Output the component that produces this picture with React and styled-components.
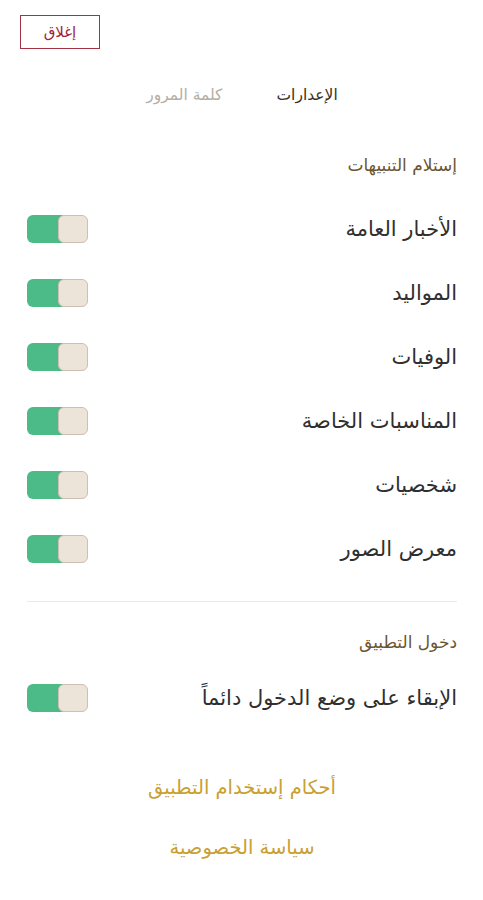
import React, { useState } from "react";
import styled, { createGlobalStyle } from "styled-components";

const GlobalStyle = createGlobalStyle`
  body {
    margin: 0;
    background: #ffffff;
    font-family: "DejaVu Sans", "Noto Sans", sans-serif;
  }
`;

const notifications = [
  "الأخبار العامة",
  "المواليد",
  "الوفيات",
  "المناسبات الخاصة",
  "شخصيات",
  "معرض الصور",
];

function Toggle({ on, onClick }) {
  return (
    <Switch onClick={onClick}>
      <Track $on={on} />
      <Knob />
    </Switch>
  );
}

function App() {
  const [state, setState] = useState(
    notifications.map(() => true).concat([true])
  );
  const flip = (i) => setState((s) => s.map((v, j) => (j === i ? !v : v)));

  return (
    <Page>
      <GlobalStyle />
      <TopBar>
        <CloseButton>إغلاق</CloseButton>
      </TopBar>
      <Tabs>
        <Tab $active>الإعدارات</Tab>
        <Tab>كلمة المرور</Tab>
      </Tabs>

      <SectionTitle>إستلام التنبيهات</SectionTitle>
      <List $gap="20px">
        {notifications.map((label, i) => (
          <Row key={label}>
            <Label>{label}</Label>
            <Toggle on={state[i]} onClick={() => flip(i)} />
          </Row>
        ))}
      </List>

      <Divider />

      <SectionTitle $small>دخول التطبيق</SectionTitle>
      <List $gap="12px">
        <Row>
          <Label>الإبقاء على وضع الدخول دائماً</Label>
          <Toggle on={state[6]} onClick={() => flip(6)} />
        </Row>
      </List>

      <Links>
        <LinkText>أحكام إستخدام التطبيق</LinkText>
        <LinkText>سياسة الخصوصية</LinkText>
      </Links>
    </Page>
  );
}

export default App;

const Page = styled.div`
  direction: rtl;
  width: 483px;
  min-height: 900px;
  box-sizing: border-box;
  padding: 15px 26px 0 27px;
`;

const TopBar = styled.div`
  display: flex;
  justify-content: flex-end;
`;

const CloseButton = styled.button`
  width: 80px;
  height: 34px;
  margin-left: -7px;
  background: #fff;
  border: 1.5px solid #a23244;
  color: #a01e35;
  font-family: "DejaVu Sans", sans-serif;
  font-size: 15px;
  padding: 0;
  cursor: pointer;
`;

const Tabs = styled.div`
  display: flex;
  justify-content: center;
  gap: 54px;
  margin-top: 34px;
  height: 24px;
  align-items: center;
`;

const Tab = styled.div`
  font-size: 15.5px;
  color: ${(p) => (p.$active ? "#3a3120" : "#b3aea6")};
`;

const SectionTitle = styled.div`
  margin-top: ${(p) => (p.$small ? "28px" : "46px")};
  height: 24px;
  line-height: 24px;
  font-size: 17px;
  color: #6b5530;
`;

const List = styled.div`
  margin-top: ${(p) => p.$gap};
`;

const Row = styled.div`
  display: flex;
  justify-content: space-between;
  align-items: center;
  height: 64px;
`;

const Label = styled.div`
  font-size: 21px;
  color: #2f2f2f;
`;

const Switch = styled.div`
  position: relative;
  width: 61px;
  height: 28px;
  cursor: pointer;
  direction: ltr;
`;

const Track = styled.div`
  position: absolute;
  left: 0;
  top: 0;
  width: 36px;
  height: 28px;
  border-radius: 6px 0 0 6px;
  background: ${(p) => (p.$on ? "#4dbb87" : "#d9d2c8")};
`;

const Knob = styled.div`
  position: absolute;
  right: 0;
  top: 0;
  width: 30px;
  height: 28px;
  box-sizing: border-box;
  border: 1.5px solid #cdbfb2;
  border-radius: 6px;
  background: #ece3d9;
`;

const Divider = styled.div`
  height: 1px;
  background: #efe9dc;
  margin-top: 20px;
`;

const Links = styled.div`
  display: flex;
  flex-direction: column;
  align-items: center;
  gap: 36px;
  margin-top: 46px;
`;

const LinkText = styled.a`
  font-size: 19.5px;
  line-height: 24px;
  color: #c9a033;
  cursor: pointer;
`;
